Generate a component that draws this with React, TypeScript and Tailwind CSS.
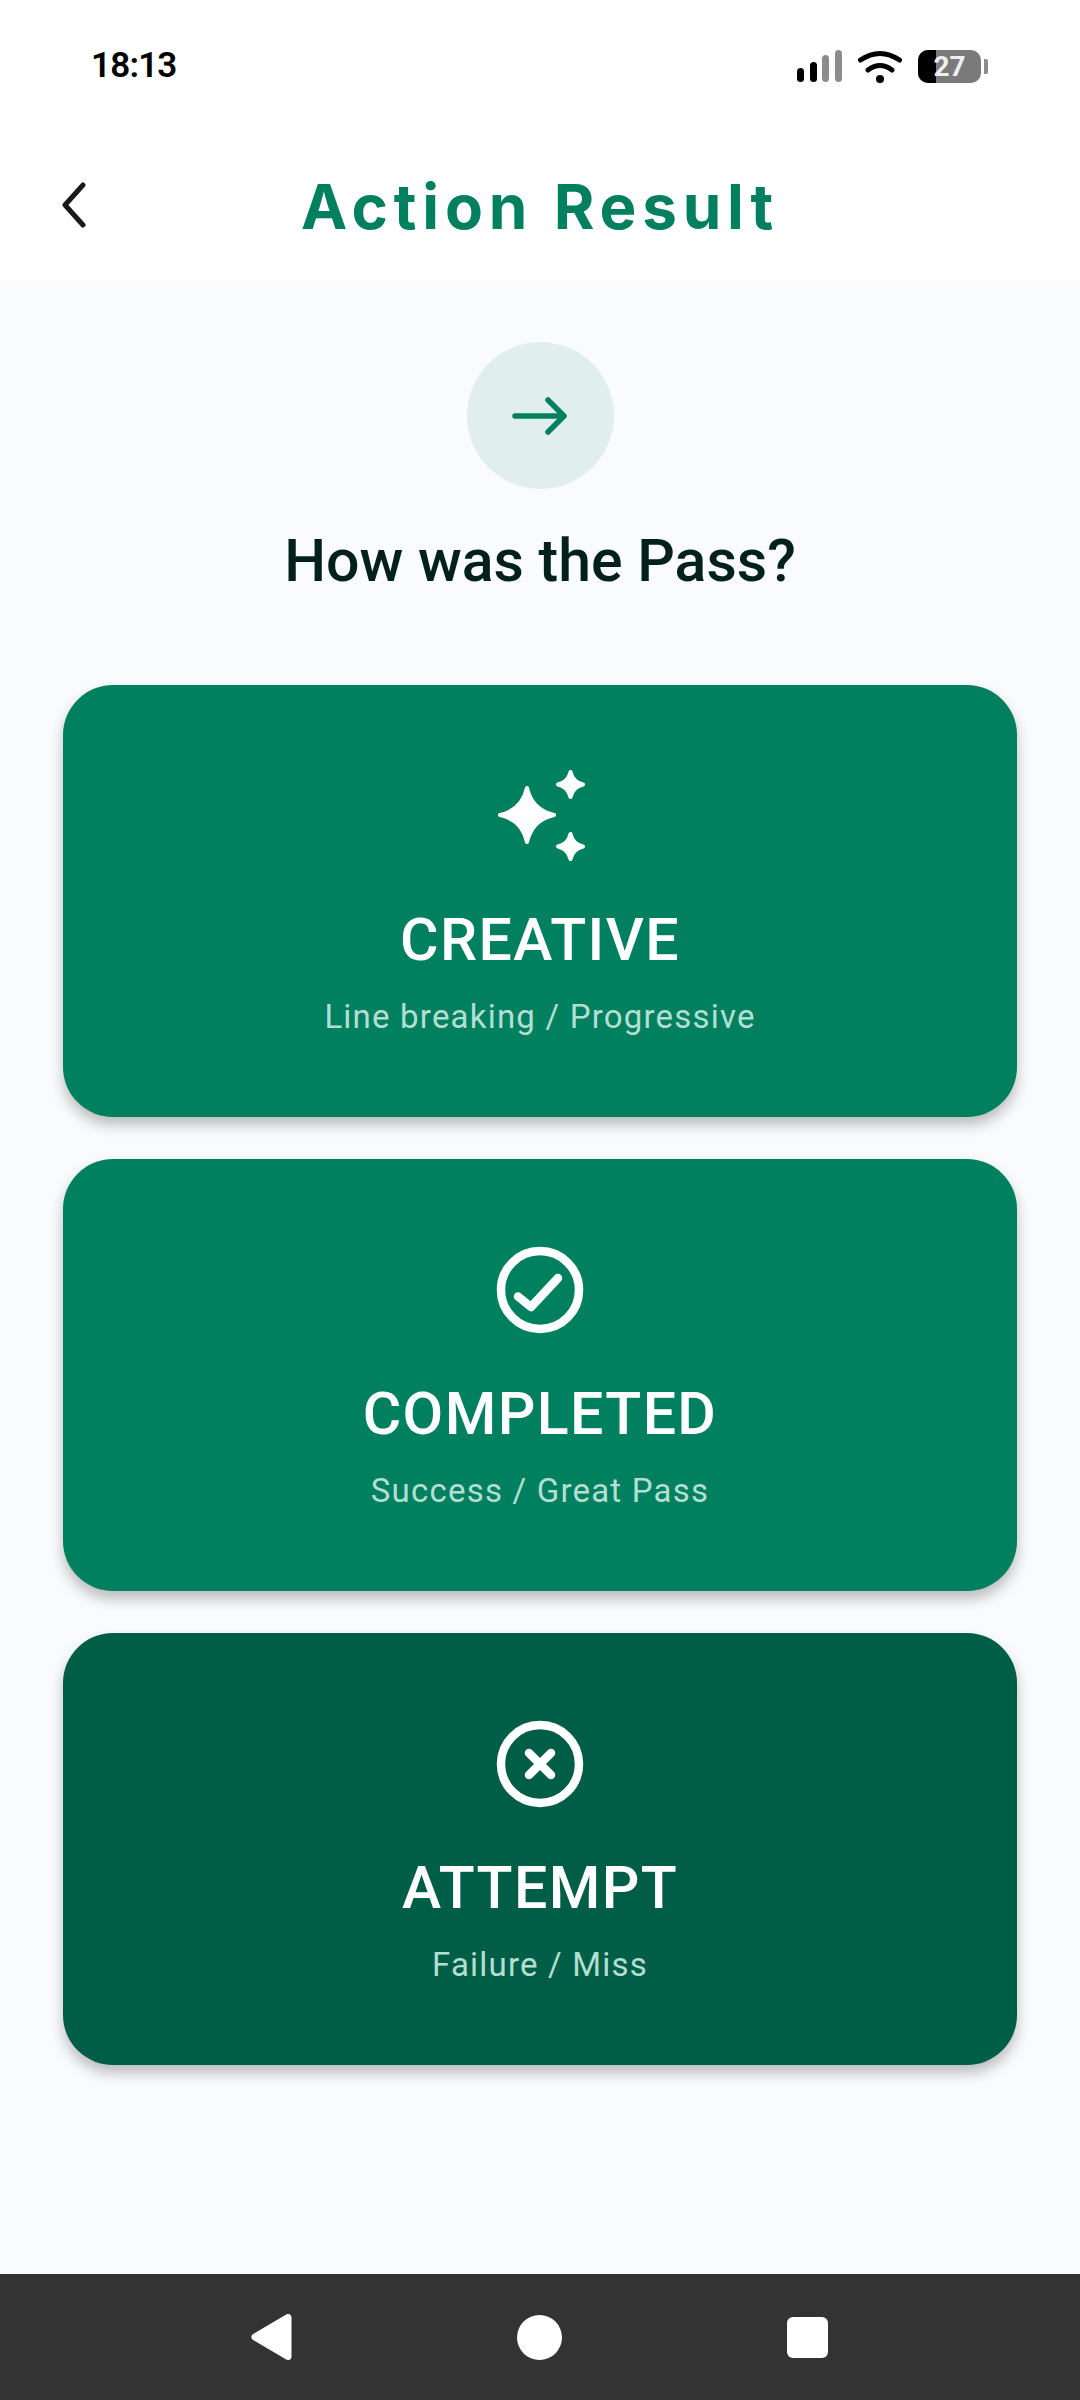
import type { ReactNode } from "react";

const ROBOTO = "font-['Roboto',sans-serif]";

function starPath(cx: number, cy: number, r: number) {
  const a = r * 0.12;
  const b = r * 0.46;
  return [
    `M${cx} ${cy - r}`,
    `C${cx + a} ${cy - b} ${cx + b} ${cy - a} ${cx + r} ${cy}`,
    `C${cx + b} ${cy + a} ${cx + a} ${cy + b} ${cx} ${cy + r}`,
    `C${cx - a} ${cy + b} ${cx - b} ${cy + a} ${cx - r} ${cy}`,
    `C${cx - b} ${cy - a} ${cx - a} ${cy - b} ${cx} ${cy - r}Z`,
  ].join("");
}

function SparklesIcon() {
  return (
    <svg width="104" height="104" viewBox="0 0 104 104" fill="#fff" stroke="#fff" strokeWidth="4" strokeLinejoin="round">
      <path d={starPath(39, 51, 27)} />
      <path d={starPath(82.5, 20.5, 12.5)} />
      <path d={starPath(82.5, 82.5, 12.5)} />
    </svg>
  );
}

function CheckIcon() {
  return (
    <svg width="104" height="104" viewBox="0 0 104 104" fill="none" stroke="#fff" strokeWidth="8.5" strokeLinecap="round" strokeLinejoin="round">
      <circle cx="52" cy="52" r="39" />
      <path d="M30 58.5L43 69L70 40" />
    </svg>
  );
}

function CrossIcon() {
  return (
    <svg width="104" height="104" viewBox="0 0 104 104" fill="none" stroke="#fff" strokeWidth="8.5" strokeLinecap="round">
      <circle cx="52" cy="52" r="39" />
      <path d="M41 41L63 63M63 41L41 63" />
    </svg>
  );
}

const CARDS: { title: string; sub: string; bg: string; icon: ReactNode }[] = [
  { title: "CREATIVE", sub: "Line breaking / Progressive", bg: "bg-[#00805f]", icon: <SparklesIcon /> },
  { title: "COMPLETED", sub: "Success / Great Pass", bg: "bg-[#00805f]", icon: <CheckIcon /> },
  { title: "ATTEMPT", sub: "Failure / Miss", bg: "bg-[#005e47]", icon: <CrossIcon /> },
];

function StatusBar() {
  return (
    <div className="flex h-[100px] items-start justify-between bg-white pr-[92px] pl-[91px] pt-[50px]">
      <span className="font-['Roboto',sans-serif] text-[35px] leading-[32px] font-semibold tracking-[-0.8px] text-black">18:13</span>
      <div className="flex items-center">
        <svg width="45" height="33" viewBox="0 0 45 33" className="mr-[16px]">
          <rect x="0" y="18" width="7" height="14" rx="3.5" fill="#000" />
          <rect x="13" y="12" width="7" height="20" rx="3.5" fill="#000" />
          <rect x="25" y="5" width="7" height="27" rx="3.5" fill="#8c8c8c" />
          <rect x="38" y="0" width="7" height="32" rx="3.5" fill="#8c8c8c" />
        </svg>
        <svg width="44" height="33" viewBox="0 0 44 33" fill="none" stroke="#000" strokeWidth="5" strokeLinecap="round" className="mr-[16px]">
          <path d="M2.5 10Q22 -3 41.5 10" />
          <path d="M10 20Q22 11 34 20" />
          <circle cx="22" cy="29" r="4" fill="#000" stroke="none" />
        </svg>
        <div className="relative flex h-[33px] w-[63px] rounded-[10px] bg-[#7a7a7a]">
          <div className="h-full w-[18px] rounded-l-[10px] bg-black" />
          <span className="absolute inset-0 flex items-center justify-center font-['Roboto',sans-serif] text-[28px] leading-none font-bold text-[#eeeeee]">
            27
          </span>
        </div>
        <div className="ml-[3px] h-[15px] w-[4px] rounded-r-[2px] bg-[#8c8c8c]" />
      </div>
    </div>
  );
}

function Header() {
  return (
    <div className="relative flex h-[180px] items-start justify-center bg-white">
      <svg width="26" height="46" viewBox="0 0 26 46" fill="none" stroke="#1a1a1a" strokeWidth="5" strokeLinecap="round" strokeLinejoin="round" className="absolute top-[82px] left-[60px]">
        <path d="M23 3L5 23L23 43" />
      </svg>
      <h1 className="mt-[72px] font-['Inter',sans-serif] text-[62px] leading-[70px] font-bold tracking-[5.8px] text-[#00805f]">
        Action Result
      </h1>
    </div>
  );
}

function NavBar() {
  return (
    <div className="flex h-[126px] items-center bg-[#333333]">
      <div className="flex w-full items-center justify-center gap-[225px] pr-[1px]">
        <svg width="41" height="46" viewBox="0 0 41 46" fill="#fff" stroke="#fff" strokeWidth="7" strokeLinejoin="round">
          <path d="M4 23L37 3.5V42.5Z" />
        </svg>
        <div className="h-[45px] w-[45px] rounded-full bg-white" />
        <div className="h-[41px] w-[41px] rounded-[6px] bg-white" />
      </div>
    </div>
  );
}

export default function App() {
  return (
    <div className={`flex h-[2400px] w-[1080px] flex-col bg-[#f9fbfd] ${ROBOTO}`}>
      <StatusBar />
      <Header />
      <main className="flex flex-1 flex-col items-center px-[63px] pt-[62px]">
        <div className="flex h-[147px] w-[147px] items-center justify-center rounded-full bg-[#e0efec]">
          <svg width="56" height="40" viewBox="0 0 56 40" fill="none" stroke="#00805f" strokeWidth="5.5" strokeLinecap="round" strokeLinejoin="round">
            <path d="M3 20H52M36 4L52 20L36 36" />
          </svg>
        </div>
        <h2 className="mt-[36px] text-[59px] leading-[72px] font-medium text-[#03211a]">How was the Pass?</h2>
        <div className="mt-[88px] flex w-full flex-col gap-[42px]">
          {CARDS.map((card) => (
            <div
              key={card.title}
              className={`flex h-[432px] flex-col items-center rounded-[50px] pt-[79px] shadow-[0_8px_14px_rgba(0,0,0,0.25)] ${card.bg}`}
            >
              {card.icon}
              <div className="mt-[38px] text-[59px] leading-[68px] font-medium tracking-[1.4px] text-white">{card.title}</div>
              <div className="mt-[23px] text-[33px] leading-[40px] tracking-[1.2px] text-[#b3dfd2]">{card.sub}</div>
            </div>
          ))}
        </div>
      </main>
      <NavBar />
    </div>
  );
}
